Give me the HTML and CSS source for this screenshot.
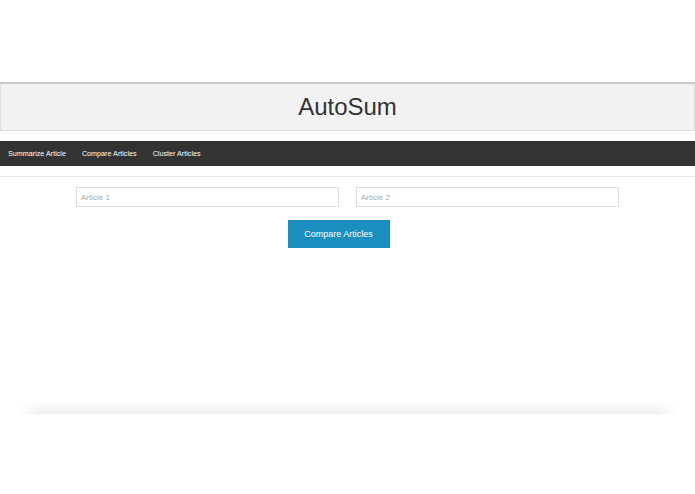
FILE: index.html
```html
<!DOCTYPE html>
<html>
<head>
<meta charset="utf-8">
<link rel="stylesheet" href="styles.css">
</head>
<body>
<div class="page">
  <header class="header"><h1 class="title">AutoSum</h1></header>
  <nav class="nav">
    <a class="nav-link">Summarize Article</a>
    <a class="nav-link">Compare Articles</a>
    <a class="nav-link">Cluster Articles</a>
  </nav>
  <div class="divider"></div>
  <form class="form">
    <div class="inputs">
      <input class="field" type="text" placeholder="Article 1">
      <input class="field" type="text" placeholder="Article 2">
    </div>
    <button class="btn" type="button">Compare Articles</button>
  </form>
  <div class="spacer"></div>
  <div class="shade"></div>
</div>
</body>
</html>
```
FILE: styles.css
```css
html, body { margin: 0; padding: 0; background: #fff; }
body { font-family: "Liberation Sans", Arial, Helvetica, sans-serif; color: #333; }
.page { padding-top: 82px; }
.header {
  height: 46px;
  background: #f2f2f2;
  border: 1px solid #dcdcdc;
  border-top: 2px solid #c9c9c9;
  display: flex; align-items: center; justify-content: center;
}
.title { margin: 0; font-weight: normal; font-size: 24px; color: #333; }
.nav {
  margin-top: 10px;
  height: 25px;
  background: #333;
  display: flex; align-items: center;
  padding-left: 8px; gap: 16px;
}
.nav-link { color: #fff; font-size: 7.2px; }
.divider { margin-top: 10px; height: 1px; background: #e6e6e6; }
.form { display: flex; flex-direction: column; align-items: center; padding-top: 10px; margin: 0; }
.inputs { display: flex; gap: 17px; }
.field {
  box-sizing: border-box; width: 263px; height: 20px;
  border: 1px solid #dedede; padding: 0 4px;
  font-family: inherit; font-size: 8px; color: #333; outline: none;
}
.field::placeholder { color: #aaa; }
.btn {
  margin-top: 13px; width: 102px; height: 28px;
  background: #1a8fbf; color: #fff; border: 0;
  font-family: inherit; font-size: 9px; margin-left: -18px;
}
.spacer { height: 152px; }
.shade {
  margin: 0 16px; height: 14px;
  background: linear-gradient(to bottom, rgba(240,240,240,0), #efefef);
  -webkit-mask-image: linear-gradient(to right, transparent, #000 24px, #000 calc(100% - 24px), transparent);
  mask-image: linear-gradient(to right, transparent, #000 24px, #000 calc(100% - 24px), transparent);
}
```
